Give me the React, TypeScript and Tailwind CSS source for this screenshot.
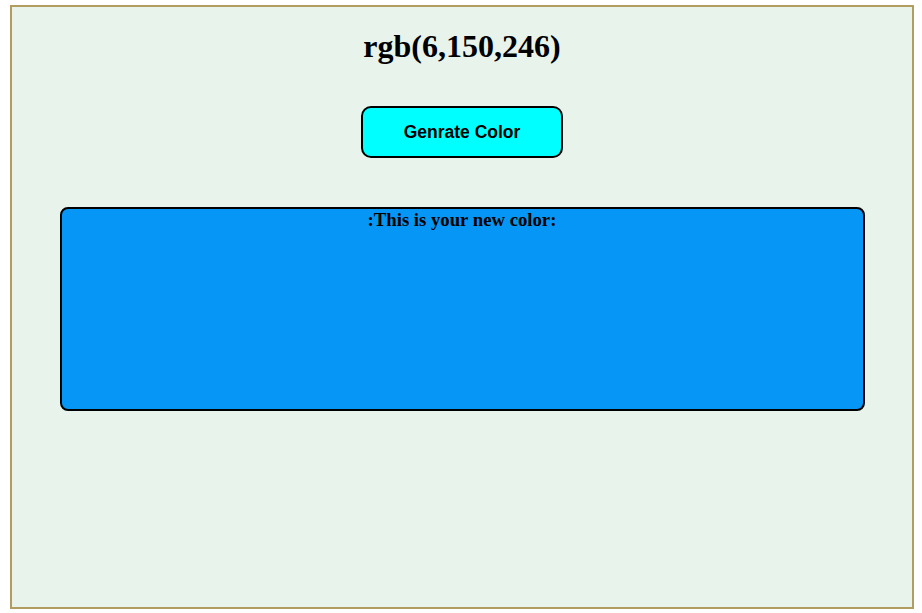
export default function App() {
  return (
    <div className="w-[922px] h-[613px] bg-white pt-[5px] pl-[10px]" style={{ fontFamily: '"Liberation Serif", serif' }}>
      <div className="w-[904px] h-[604px] border-2 border-[#b39c60] bg-[#e8f3eb] flex flex-col items-center">
        <h1 className="mt-[21px] text-[32px] font-bold leading-[37px] text-black">rgb(6,150,246)</h1>
        <button
          className="mt-[41px] w-[202px] h-[52px] border-2 border-black rounded-[10px] bg-[#00ffff] text-[17.5px] font-bold text-black"
          style={{ fontFamily: '"Liberation Sans", Arial, sans-serif' }}
        >
          Genrate Color
        </button>
        <div className="mt-[49px] w-[805px] h-[204px] border-2 border-black rounded-[8px] bg-[rgb(6,150,246)] flex flex-col items-center">
          <p className="text-[18.72px] font-bold leading-[21px] mt-[0px] text-black">:This is your new color:</p>
        </div>
      </div>
    </div>
  );
}
